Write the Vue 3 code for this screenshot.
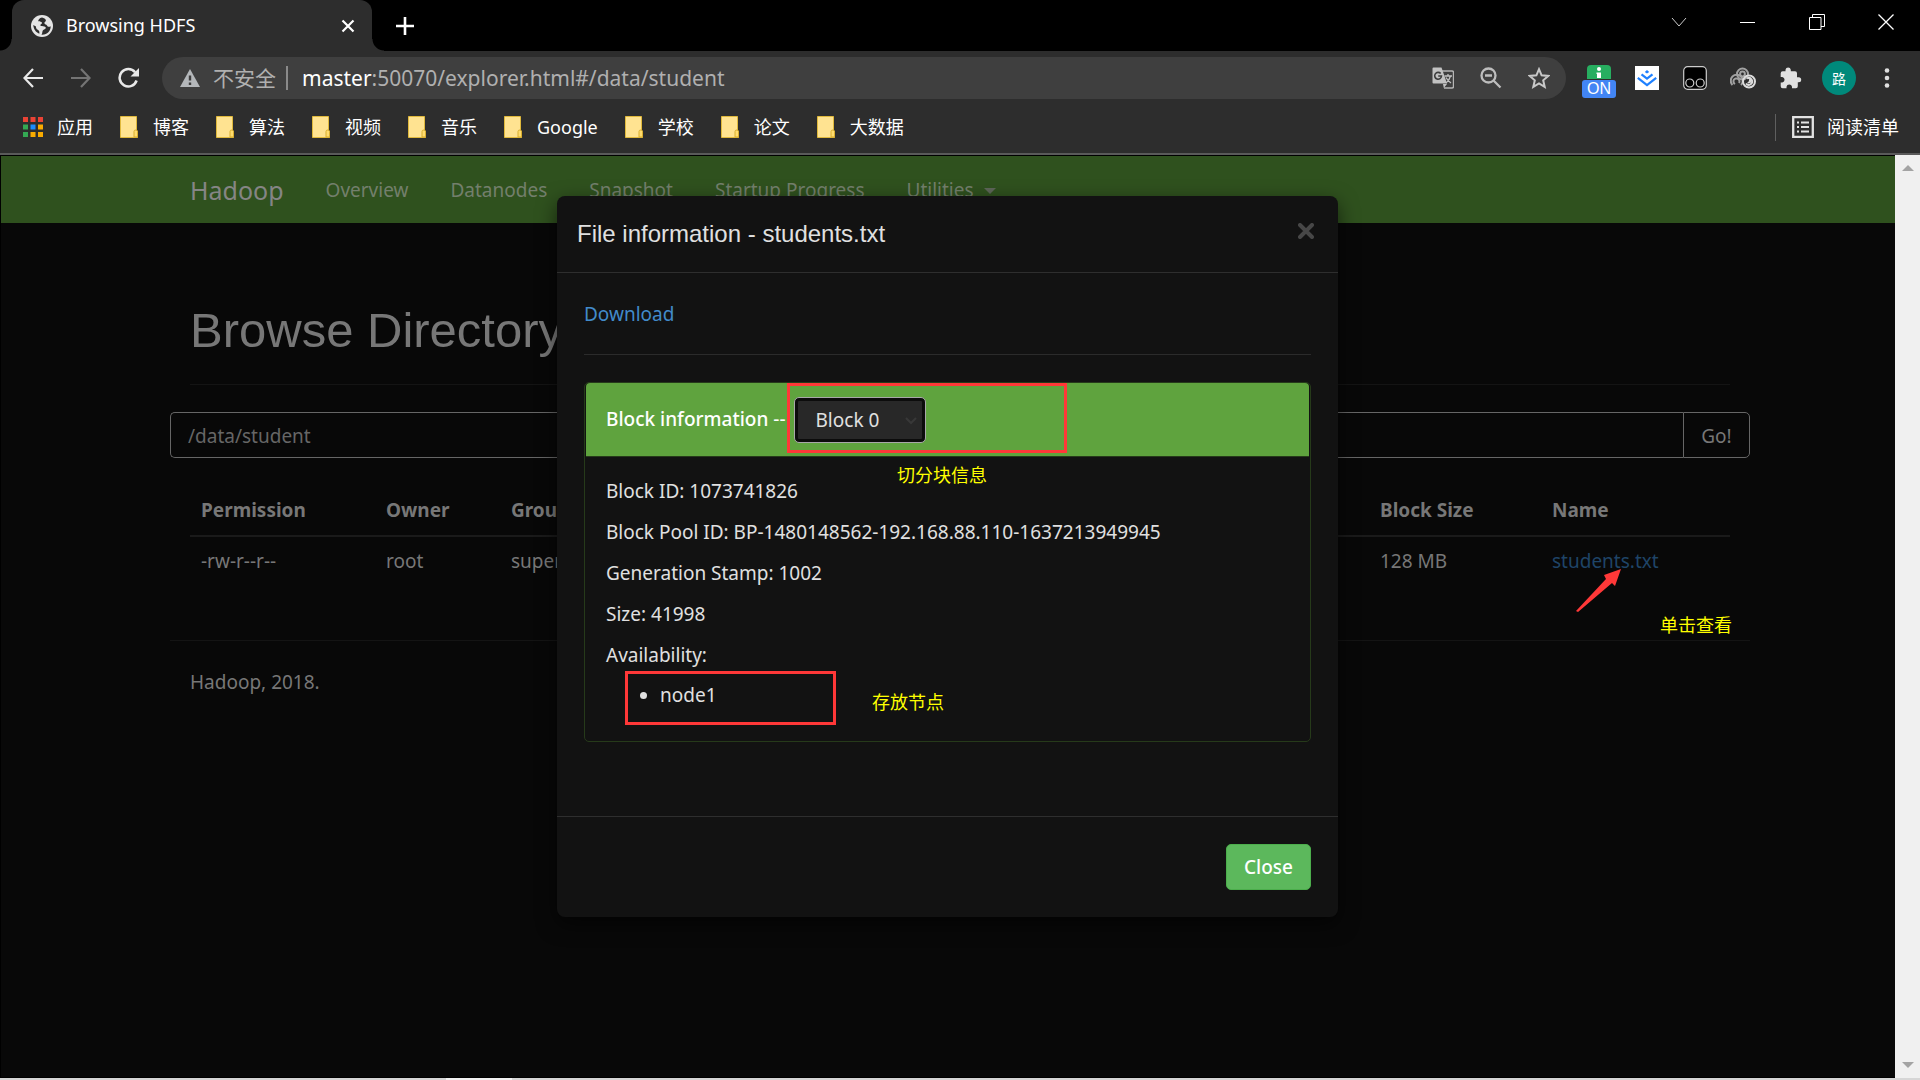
<script setup>
import { ref } from 'vue'

const bookmarks = ['博客', '算法', '视频', '音乐', 'Google', '学校', '论文', '大数据']
const navItems = ['Overview', 'Datanodes', 'Snapshot', 'Startup Progress']
const columns = [
    { key: 'permission', label: 'Permission' },
    { key: 'owner', label: 'Owner' },
    { key: 'group', label: 'Group' },
    { key: 'size', label: 'Size' },
    { key: 'modified', label: 'Last Modified' },
    { key: 'replication', label: 'Replication' },
    { key: 'block', label: 'Block Size' },
    { key: 'name', label: 'Name' },
]
const file = {
    permission: '-rw-r--r--',
    owner: 'root',
    group: 'supergroup',
    size: '41.01 KB',
    modified: '2021/11/18',
    replication: '1',
    block: '128 MB',
    name: 'students.txt',
}
const details = [
    'Block ID: 1073741826',
    'Block Pool ID: BP-1480148562-192.168.88.110-1637213949945',
    'Generation Stamp: 1002',
    'Size: 41998',
    'Availability:',
]
const appColors = [
    '#ea4335', '#ea4335', '#ea4335',
    '#34a853', '#1a8cff', '#f9ab00',
    '#34a853', '#f9ab00', '#f9ab00',
]

const directory = ref('/data/student')
const block = ref('Block 0')
</script>

<template>
    <div class="window">
        <header class="tabstrip">
            <div class="tab">
                <svg class="favicon" viewBox="0 0 24 24" width="24" height="24">
                    <circle cx="12" cy="12" r="11" fill="#e4e4e4" />
                    <path
                        d="M12 3.5c-2.6.6-3.6 2-3.8 3.6 1.5 1.400 3.300.3 3.800 1.700.4 1.300-1.800 1.300-1.600 2.700.2 1.100 2.200.7 4 .9 1.800.2 1.700 1.800.6 2.600-1.200.9-2.500 1-2.600 2.800-.1 1.300-.4 2.100-.9 2.900 5.500.4 9.200-3.600 9.200-8.500-1.700.9-3.200.6-3.700-.8-.5-1.300-2.300-.6-2.600-2.200-.2-1.500 1.900-1.600 1.500-3-.4-1.400-2-2-3.900-2.700zM3.300 11c.2 4 2.500 7.300 6 8.700.4-1.900-.1-3.300-1.500-4C6.300 15 5.900 13.600 6 12.400 5 11.900 4.200 11.400 3.300 11z"
                        fill="#2d2d2d"
                    />
                </svg>
                <span class="tab-title">Browsing HDFS</span>
                <button class="plain" aria-label="Close tab">
                    <svg viewBox="0 0 14 14" width="14" height="14" stroke="#fff" stroke-width="2.200">
                        <path d="M1.500 1.500l11 11M12.500 1.500l-11 11" />
                    </svg>
                </button>
            </div>
            <button class="plain new-tab" aria-label="New tab">
                <svg viewBox="0 0 18 18" width="18" height="18" stroke="#fff" stroke-width="2.600">
                    <path d="M9 0v18M0 9h18" />
                </svg>
            </button>
            <div class="window-buttons">
                <button class="plain" aria-label="Search tabs">
                    <svg viewBox="0 0 16 16" width="16" height="16" fill="none" stroke="#ccc">
                        <path d="M1 4l7 8 7-8" />
                    </svg>
                </button>
                <button class="plain" aria-label="Minimize">
                    <svg viewBox="0 0 16 16" width="16" height="16" stroke="#fff">
                        <path d="M0 8.500h15" />
                    </svg>
                </button>
                <button class="plain" aria-label="Restore">
                    <svg viewBox="0 0 16 16" width="16" height="16" fill="none" stroke="#fff">
                        <path d="M.5 3.500h11.500v12H.5zM3.500 3.500v-3h12v12h-3.500" />
                    </svg>
                </button>
                <button class="plain" aria-label="Close window">
                    <svg viewBox="0 0 16 16" width="16" height="16" stroke="#fff" stroke-width="1.300">
                        <path d="M.5.5l15 15M15.500.5l-15 15" />
                    </svg>
                </button>
            </div>
        </header>

        <div class="toolbar">
            <div class="history">
                <button class="plain" aria-label="Back">
                    <svg viewBox="0 0 20 20" width="20" height="20" fill="none" stroke="#e8e8e8" stroke-width="2.200">
                        <path d="M20 10H1.500M10 1L1.500 10l8.500 9" />
                    </svg>
                </button>
                <button class="plain" aria-label="Forward">
                    <svg viewBox="0 0 20 20" width="20" height="20" fill="none" stroke="#747474" stroke-width="2.200">
                        <path d="M0 10h18.500M10 1l8.500 9-8.500 9" />
                    </svg>
                </button>
                <button class="plain" aria-label="Reload">
                    <svg viewBox="0 0 22 22" width="22" height="22">
                        <path
                            d="M18.600 13.500a8.700 8.700 0 1 1-1.500-8.200"
                            fill="none"
                            stroke="#e8e8e8"
                            stroke-width="2.500"
                        />
                        <path d="M21 1v8.500h-8.500z" fill="#e8e8e8" />
                    </svg>
                </button>
            </div>
            <div class="omnibox">
                <svg class="warning" viewBox="0 0 20 18" width="20" height="18">
                    <path d="M10 0l10 18H0z" fill="#b4b7ba" />
                    <path d="M10 6.500v5M10 13.500v2.500" stroke="#3d3d3d" stroke-width="2.400" />
                </svg>
                <span class="insecure">不安全</span>
                <span class="url"><b>master</b>:50070/explorer.html#/data/student</span>
                <div class="omnibox-icons">
                    <button class="plain" aria-label="Translate">
                        <svg viewBox="0 0 22 22" width="22" height="22">
                            <path d="M9.500 4H20a1.500 1.500 0 0 1 1.500 1.500v14A1.500 1.500 0 0 1 20 21h-8" fill="none" stroke="#b5b5b5" stroke-width="1.400" />
                            <path d="M1.500.5h8l5.500 16H1.500a1 1 0 0 1-1-1v-14a1 1 0 0 1 1-1zM11 17h4l-3.200 4z" fill="#c2c2c2" />
                            <path d="M8.700 6.600a3.400 3.400 0 1 0 .8 2.400H6.200" fill="none" stroke="#3d3d3d" stroke-width="1.600" />
                            <path d="M12.500 9H20M16 7v2M18.500 9c-.8 3-2.300 5.300-4.500 7M14 10.500c1.200 2.300 2.900 4 5 5.500" fill="none" stroke="#c2c2c2" stroke-width="1.300" />
                        </svg>
                    </button>
                    <button class="plain" aria-label="Zoom">
                        <svg viewBox="0 0 22 22" width="22" height="22" fill="none" stroke="#bdbdbd" stroke-width="2.300">
                            <circle cx="8.500" cy="8.500" r="7" />
                            <path d="M13.500 13.500l7 7M5 8.500h7" />
                        </svg>
                    </button>
                    <button class="plain" aria-label="Bookmark this page">
                        <svg viewBox="0 0 22 22" width="22" height="22" fill="none" stroke="#c8c8c8" stroke-width="2">
                            <path d="M11 2.200l2.600 6.100 6.600.6-5 4.400 1.500 6.500-5.700-3.500-5.700 3.500 1.500-6.500-5-4.400 6.600-.6z" />
                        </svg>
                    </button>
                </div>
            </div>
            <div class="extensions">
                <button class="plain ext-on" aria-label="Extension on">
                    <svg viewBox="0 0 24 14" width="24" height="14">
                        <path d="M0 14V4a4 4 0 0 1 4-4h16a4 4 0 0 1 4 4v10z" fill="#27ae60" />
                        <circle cx="12" cy="4" r="2" fill="#fff" />
                        <path d="M9.500 7.500H14V13h-4V9h-.5z" fill="#fff" />
                    </svg>
                    <span class="on-badge">ON</span>
                </button>
                <button class="plain" aria-label="Juejin">
                    <svg viewBox="0 0 24 24" width="24" height="24">
                        <path d="M0 0h24v24H0z" fill="#fff" />
                        <path d="M12 4l2.200 1.900L12 7.600 9.800 5.900z" fill="#1e80ff" />
                        <path d="M6.500 8.300L12 12.600l5.500-4.300M2.800 11.800L12 19l9.200-7.200" fill="none" stroke="#1e80ff" stroke-width="2.200" />
                    </svg>
                </button>
                <button class="plain" aria-label="Tampermonkey">
                    <svg viewBox="0 0 24 24" width="24" height="24">
                        <rect x=".7" y=".7" width="22.600" height="22.600" rx="4" fill="#000" stroke="#ccc" stroke-width="1.200" />
                        <g fill="none" stroke="#ccc" stroke-width="1.200">
                            <circle cx="6.800" cy="17" r="4" />
                            <circle cx="17.200" cy="17" r="4" />
                        </g>
                    </svg>
                </button>
                <button class="plain" aria-label="Curls">
                    <svg viewBox="0 0 26 22" width="26" height="22" fill="none">
                        <g stroke="#a2a2a2" stroke-width="2">
                            <path d="M2.500 18a6 6 0 1 1 8.500 0M5 17a3 3 0 1 1 4-1" />
                            <circle cx="12.500" cy="7" r="5.500" />
                            <circle cx="12.500" cy="7" r="2.400" />
                        </g>
                        <g stroke="#dcdcdc" stroke-width="2">
                            <circle cx="19" cy="14.500" r="6" />
                            <path d="M16 16.500a3.400 3.400 0 1 0 1-5M18 15a1.200 1.200 0 1 0 1-2" />
                        </g>
                    </svg>
                </button>
                <button class="plain" aria-label="Extensions">
                    <svg viewBox="0 0 22 22" width="22" height="22">
                        <path
                            d="M18.700 10.300H17V6.200a2 2 0 0 0-2-2h-4.200V2.700a2.700 2.700 0 0 0-5.300 0v1.500H2.700a2 2 0 0 0-2 2V10h1.600a2.800 2.800 0 0 1 0 5.500H.7v3.800a2 2 0 0 0 2 2h3.800v-1.600a2.800 2.800 0 0 1 5.500 0v1.600h3.800a2 2 0 0 0 2-2v-4h.9a2.500 2.500 0 0 0 0-5z"
                            fill="#e0e0e0"
                        />
                    </svg>
                </button>
                <button class="avatar" aria-label="Profile">路</button>
                <button class="plain" aria-label="Menu">
                    <svg viewBox="0 0 6 20" width="6" height="20" fill="#e0e0e0">
                        <circle cx="3" cy="2.500" r="2.300" />
                        <circle cx="3" cy="10" r="2.300" />
                        <circle cx="3" cy="17.500" r="2.300" />
                    </svg>
                </button>
            </div>
        </div>

        <nav class="bookmarks">
            <a href="#" class="bookmark apps">
                <svg viewBox="0 0 20 20" width="20" height="20">
                    <rect
                        v-for="(color, i) in appColors"
                        :key="i"
                        :x="(i % 3) * 7.5"
                        :y="Math.floor(i / 3) * 7.5"
                        width="5"
                        height="5"
                        :fill="color"
                    />
                </svg>
                应用
            </a>
            <a v-for="name in bookmarks" :key="name" href="#" class="bookmark">
                <svg viewBox="0 0 18 22" width="18" height="22">
                    <path d="M.5.5h16v14l1 1v6H.5z" fill="#ffe391" stroke="#e0b93c" />
                    <path d="M14 21v-5.500q0-1.500 1.800-1.500t1.700 1.500V21z" fill="#ffdc6e" stroke="#d9ae2e" />
                </svg>
                {{ name }}
            </a>
            <a href="#" class="bookmark reading-list">
                <svg viewBox="0 0 22 22" width="22" height="22" fill="none" stroke="#e2e2e2" stroke-width="2">
                    <path d="M1.200 1.200h19.600v19.600H1.200z" stroke-width="2.300" />
                    <path d="M5 6.500h2M5 11h2M5 15.500h2M9 6.500h8M9 11h8M9 15.500h8" />
                </svg>
                阅读清单
            </a>
        </nav>

        <div class="viewport">
            <div class="page">
                <nav class="navbar">
                    <a href="#" class="brand">Hadoop</a>
                    <a v-for="item in navItems" :key="item" href="#">{{ item }}</a>
                    <a href="#">Utilities<span class="caret"></span></a>
                </nav>

                <main class="container">
                    <h1>Browse Directory</h1>
                    <form class="path" @submit.prevent>
                        <input v-model="directory" type="text" aria-label="Directory" />
                        <button type="submit">Go!</button>
                    </form>
                    <table>
                        <thead>
                            <tr>
                                <th v-for="col in columns" :key="col.key" :class="col.key">{{ col.label }}</th>
                            </tr>
                        </thead>
                        <tbody>
                            <tr>
                                <td v-for="col in columns" :key="col.key">
                                    <a v-if="col.key === 'name'" href="#">{{ file.name }}</a>
                                    <template v-else>{{ file[col.key] }}</template>
                                </td>
                            </tr>
                        </tbody>
                    </table>
                    <footer>Hadoop, 2018.</footer>
                    <svg class="arrow" viewBox="0 0 46 43" width="46" height="43">
                        <path d="M45 0L28 6l2 4L0 42l2 1 34-29 3 3z" fill="#ff3838" />
                    </svg>
                    <span class="note note-click">单击查看</span>
                </main>

                <div class="overlay">
                    <section class="modal" role="dialog" aria-labelledby="modal-title">
                        <header class="modal-header">
                            <h4 id="modal-title">File information - students.txt</h4>
                            <button class="plain" aria-label="Close">
                                <svg viewBox="0 0 16 16" width="16" height="16" stroke="#474747" stroke-width="4">
                                    <path d="M2 2l12 12M14 2L2 14" stroke-linecap="round" />
                                </svg>
                            </button>
                        </header>
                        <div class="modal-body">
                            <a href="#" class="download">Download</a>
                            <hr />
                            <div class="panel">
                                <div class="panel-heading">
                                    <label for="block"><b>Block information</b> --</label>
                                    <div class="select">
                                        <select id="block" v-model="block">
                                            <option>Block 0</option>
                                        </select>
                                        <svg viewBox="0 0 12 8" width="12" height="8" fill="none" stroke="#383838" stroke-width="2">
                                            <path d="M1 1l5 5 5-5" />
                                        </svg>
                                    </div>
                                </div>
                                <div class="panel-body">
                                    <p v-for="line in details" :key="line">{{ line }}</p>
                                    <ul>
                                        <li>node1</li>
                                    </ul>
                                </div>
                            </div>
                        </div>
                        <footer class="modal-footer">
                            <button class="close-button">Close</button>
                        </footer>
                        <span class="mark mark-block"></span>
                        <span class="note note-block">切分块信息</span>
                        <span class="mark mark-node"></span>
                        <span class="note note-node">存放节点</span>
                    </section>
                </div>
            </div>
            <div class="scrollbar">
                <svg viewBox="0 0 12 6" width="12" height="6"><path d="M0 6l6-6 6 6z" fill="#a3a3a3" /></svg>
                <svg viewBox="0 0 12 6" width="12" height="6"><path d="M0 0l6 6 6-6z" fill="#a3a3a3" /></svg>
            </div>
        </div>
        <div class="taskbar-edge"></div>
    </div>
</template>

<style>
body {
    background: #080808;
}
</style>

<style scoped>
* {
    box-sizing: border-box;
}

.window {
    display: flex;
    flex-direction: column;
    height: 100vh;
    overflow: hidden;
    font-family: "Noto Sans", "Noto Sans CJK SC", sans-serif;
    font-size: 19px;
    line-height: 27px;
    color: #777;
}

a {
    color: inherit;
    text-decoration: none;
}

svg {
    display: block;
    flex: none;
}

button,
input,
select {
    font: inherit;
}

.plain {
    display: flex;
    align-items: center;
    justify-content: center;
    padding: 0;
    border: 0;
    background: none;
}

/* browser frame */
.tabstrip {
    display: flex;
    align-items: stretch;
    flex: none;
    height: 51px;
    padding-left: 12px;
    background: #000;
}

.tab {
    position: relative;
    display: flex;
    align-items: center;
    width: 360px;
    padding: 0 17px 0 18px;
    border-radius: 12px 12px 0 0;
    background: #2d2d2d;
    color: #fff;
    font-size: 18px;
}

.tab::before,
.tab::after {
    content: "";
    position: absolute;
    bottom: 0;
    width: 12px;
    height: 12px;
}

.tab::before {
    right: 100%;
    background: radial-gradient(circle at 0 0, #000 11px, #2d2d2d 12px);
}

.tab::after {
    left: 100%;
    background: radial-gradient(circle at 100% 0, #000 11px, #2d2d2d 12px);
}

.tab-title {
    flex: 1;
    padding-left: 12px;
}

.new-tab {
    margin-left: 24px;
}

.window-buttons {
    display: flex;
    margin-left: auto;
    height: 43px;
}

.window-buttons button {
    width: 69px;
}

.toolbar {
    display: flex;
    align-items: center;
    flex: none;
    height: 54px;
    background: #2d2d2d;
}

.history {
    display: flex;
    padding: 0 9px;
}

.history button {
    width: 48px;
}

.omnibox {
    display: flex;
    align-items: center;
    flex: 1;
    height: 42px;
    padding: 0 3px 0 18px;
    border-radius: 21px;
    background: #3f3f3f;
    color: #b0b0b0;
    font-size: 21px;
}

.insecure {
    margin: 0 14px 0 13px;
    padding-right: 10px;
    border-right: 2px solid #8a8a8a;
    line-height: 24px;
}

.url b {
    color: #fff;
    font-weight: 400;
}

.omnibox-icons {
    display: flex;
    margin-left: auto;
}

.omnibox-icons button {
    width: 48px;
}

.extensions {
    display: flex;
    align-items: center;
    padding: 0 9px;
}

.extensions button {
    width: 48px;
}

.ext-on {
    flex-direction: column;
    padding-top: 6px;
}

.on-badge {
    width: 34px;
    margin-top: 1px;
    border-radius: 3px;
    background: #4285f4;
    color: #fff;
    font: 16px/18px "Liberation Sans", sans-serif;
}

.extensions .avatar {
    width: 34px;
    height: 34px;
    margin: 0 7px;
    padding: 0;
    border: 0;
    border-radius: 50%;
    background: #00897b;
    color: #fff;
    font-size: 14px;
}

.bookmarks {
    display: flex;
    align-items: center;
    flex: none;
    gap: 27px;
    height: 50px;
    padding: 0 21px 4px 23px;
    border-bottom: 2px solid #5a5a5a;
    background: #2d2d2d;
    color: #fff;
    font-size: 18px;
}

.bookmark {
    display: flex;
    align-items: center;
    gap: 15px;
}

.apps {
    gap: 14px;
}

.reading-list {
    gap: 13px;
    margin-left: auto;
    padding-left: 16px;
    border-left: 1px solid #5f5f5f;
}

/* hadoop page */
.viewport {
    display: flex;
    flex: 1;
    min-height: 0;
}

.page {
    position: relative;
    flex: 1;
    overflow: hidden;
    border: solid #000;
    border-width: 1px 0 1px 1px;
    background: #080808;
}

.navbar {
    display: flex;
    align-items: center;
    height: 67px;
    padding: 2px 168px 0;
    background: #2f511e;
    color: #737f6c;
}

.navbar a {
    display: flex;
    align-items: center;
    padding: 0 21px;
}

.navbar .brand {
    color: #858585;
    font-size: 25px;
}

.caret {
    margin-left: 10px;
    border: 6px solid transparent;
    border-top-color: #5e6659;
    border-bottom: 0;
}

.container {
    position: relative;
    margin: 0 145px 0 169px;
    padding-top: 76px;
}

h1 {
    margin: 0 20px 27px;
    padding-bottom: 22px;
    border-bottom: 1px solid #141414;
    font: 500 49px/63px "Liberation Sans", sans-serif;
}

.path {
    display: flex;
    height: 46px;
}

.path input {
    flex: 1;
    min-width: 0;
    padding: 2px 17px 0;
    border: 1px solid #666;
    border-right: 0;
    border-radius: 5px 0 0 5px;
    background: #080808;
    color: #666;
}

.path button {
    width: 67px;
    padding: 2px 0 0;
    border: 1px solid #666;
    border-radius: 0 5px 5px 0;
    background: #080808;
    color: #777;
}

table {
    width: calc(100% - 40px);
    margin: 28px 20px 54px;
    border-collapse: collapse;
    table-layout: fixed;
}

th,
td {
    padding: 11px;
    text-align: left;
    white-space: nowrap;
}

th {
    border-bottom: 2px solid #1a1a1a;
}

td a {
    color: #1f4467;
}

.permission {
    width: 185px;
}

.owner {
    width: 125px;
}

.block {
    width: 172px;
}

.name {
    width: 189px;
}

.container footer {
    padding: 28px 20px;
    border-top: 1px solid #141414;
}

/* block details */
.overlay {
    position: absolute;
    inset: 0 1px 0 0;
    display: flex;
    align-items: flex-start;
    justify-content: center;
    padding-top: 40px;
}

.modal {
    position: relative;
    width: 90%;
    max-width: 781px;
    border-radius: 8px;
    background: #121212;
    box-shadow: 0 7px 20px rgba(0, 0, 0, 0.6);
    color: #e0e0e0;
}

.modal-header {
    display: flex;
    align-items: flex-start;
    justify-content: space-between;
    padding: 20px 24px 20px 20px;
    border-bottom: 1px solid #2e2e2e;
}

.modal-header .plain {
    margin-top: 7px;
}

h4 {
    margin: 0;
    font: 500 24px/36px "Liberation Sans", sans-serif;
}

.modal-body {
    padding: 28px 27px 27px;
}

.download {
    color: #428bca;
}

hr {
    margin: 26px 0 27px;
    border: 0;
    border-top: 1px solid #2b2b2b;
}

.panel {
    margin-bottom: 47px;
    padding: 0 1px;
    border: 1px solid #263a1a;
    border-radius: 5px;
}

.panel-heading {
    display: flex;
    align-items: center;
    gap: 8px;
    height: 74px;
    padding: 0 20px;
    border-bottom: 1px solid #263a1a;
    border-radius: 4px 4px 0 0;
    background: #5fa33e;
    color: #fff;
}

.panel-heading b {
    font-weight: 500;
}

.select {
    position: relative;
}

.select select {
    appearance: none;
    width: 132px;
    height: 46px;
    padding: 1px 21px 0;
    border: 1px solid #a8a8a8;
    border-radius: 5px;
    background: #282828;
    box-shadow: inset 0 0 0 3px #0c0c0c;
    color: #e0e0e0;
}

.select svg {
    position: absolute;
    top: 20px;
    right: 9px;
}

.panel-body {
    padding: 21px 20px 19px;
}

p {
    margin: 0 0 14px;
}

p:last-of-type {
    margin-bottom: 13px;
}

ul {
    margin: 0 0 13px;
    padding-left: 54px;
}

.modal-footer {
    display: flex;
    justify-content: flex-end;
    padding: 27px;
    border-top: 1px solid #2e2e2e;
}

.close-button {
    width: 85px;
    height: 46px;
    padding: 0;
    border: 1px solid #4cae4c;
    border-radius: 5px;
    background: #5cb85c;
    color: #fff;
    font-weight: 500;
}

/* annotations drawn over the page */
.mark,
.note,
.arrow {
    position: absolute;
}

.mark {
    border: 3px solid #ff3838;
}

.note {
    color: #ff0;
    font-size: 18px;
    white-space: nowrap;
}

.mark-block {
    left: 230px;
    top: 187px;
    width: 280px;
    height: 70px;
}

.note-block {
    left: 340px;
    top: 266px;
}

.mark-node {
    left: 68px;
    top: 475px;
    width: 211px;
    height: 54px;
}

.note-node {
    left: 315px;
    top: 493px;
}

.arrow {
    right: 128px;
    top: 346px;
}

.note-click {
    right: 18px;
    top: 389px;
}

.scrollbar {
    display: flex;
    flex-direction: column;
    align-items: center;
    justify-content: space-between;
    width: 25px;
    padding: 10px 0;
    background: #f0f0f0;
}

.taskbar-edge {
    flex: none;
    height: 2px;
    background: linear-gradient(90deg, #d6d6d6 446px, #f2f2f2 446px 512px, #d6d6d6 512px);
}
</style>
